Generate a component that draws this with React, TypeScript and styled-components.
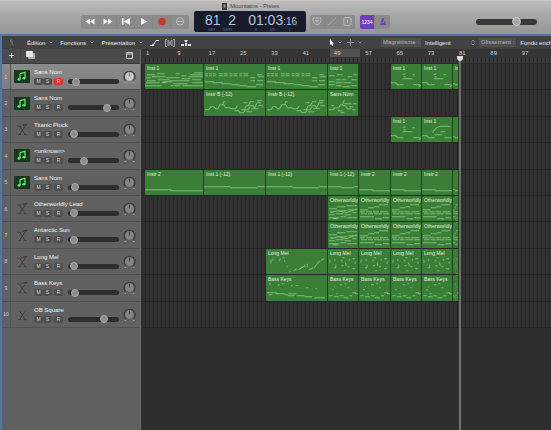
import React from "react";
import styled, { createGlobalStyle, css } from "styled-components";

const Global = createGlobalStyle`
  * { box-sizing: border-box; }
  body { margin: 0; background: #2e2e2e; font-family: "Liberation Sans", Arial, sans-serif; }
  button, select, input { font: inherit; color: inherit; margin: 0; padding: 0; border: 0; background: none; }
`;

const Window = styled.div`
  min-height: 100vh;
  display: flex;
  flex-direction: column;
  overflow: hidden;
`;

const Header = styled.header`
  border-top: 1px solid #cfc5be;
  background: linear-gradient(#bdbdbd, #a9a9a9 40%, #969696);
`;

const TitleBar = styled.h1`
  margin: 0;
  height: 10px;
  padding-left: 222px;
  display: flex;
  align-items: center;
  gap: 3px;
  font-size: 6px;
  line-height: 8px;
  font-weight: 400;
  color: #444;
  white-space: nowrap;
`;

const Toolbar = styled.div`
  height: 23px;
  padding: 0 14px 2px 81px;
  display: flex;
  align-items: center;
`;

const ButtonGroup = styled.div`
  display: flex;
  height: 14px;
  border-radius: 2px;
  overflow: hidden;
  background: #8b8b8b;
`;

const ToolButton = styled.button<{ $wide?: boolean; $active?: boolean }>`
  width: ${(p) => (p.$wide ? 18 : 15)}px;
  height: 14px;
  display: grid;
  place-items: center;
  border-right: 1px solid #858585;
  font-size: 5px;
  font-weight: 700;
  &:last-child { border-right: 0; }
  ${(p) => p.$active && css`background: #7142b4; color: #e3d6f5;`}
`;

const Gap = styled.span`
  width: 5px;
`;

const Lcd = styled.div`
  margin: 0 4px 0 5px;
  width: 112px;
  height: 21px;
  padding: 0 2px 0 11px;
  display: flex;
  align-items: center;
  gap: 12px;
  border-radius: 2px;
  background: #171b2b;
  color: #b3c4de;
  & > svg { margin-left: auto; }
`;

const Readout = styled.div`
  display: grid;
  font-size: 14px;
  line-height: 17px;
  white-space: nowrap;
  small { font-size: 10px; line-height: 10px; }
`;

const Captions = styled.div`
  display: flex;
  justify-content: space-around;
  font-size: 3px;
  line-height: 3px;
  color: #60708e;
`;

const Range = styled.input<{ $master?: boolean }>`
  appearance: none;
  display: block;
  width: ${(p) => (p.$master ? 61 : 51)}px;
  height: ${(p) => (p.$master ? 6 : 5)}px;
  border-radius: 3px;
  background: ${(p) => (p.$master ? "#373a34" : "#2f2f2e")};
  &::-webkit-slider-thumb {
    appearance: none;
    width: ${(p) => (p.$master ? 9 : 8)}px;
    height: ${(p) => (p.$master ? 9 : 8)}px;
    border-radius: 5px;
    border: 1px solid ${(p) => (p.$master ? "#cacaca" : "#aaa")};
    background: ${(p) => (p.$master ? "#a5a5a5" : "#8d8d8d")};
  }
`;

const Master = styled.div`
  margin-left: auto;
`;

const Editor = styled.main`
  flex: 1;
  display: flex;
  flex-direction: column;
  border: solid #5475a5;
  border-width: 2px 0 0 2px;
`;

const MenuBar = styled.nav`
  height: 13px;
  display: flex;
  align-items: center;
  overflow: hidden;
  background: #424242;
  color: #ececec;
  font-size: 6px;
  line-height: 8px;
  white-space: nowrap;
`;

const MenuSection = styled.div<{ $width?: number; $pad?: number; $gap?: number }>`
  flex: none;
  width: ${(p) => (p.$width ? `${p.$width}px` : "auto")};
  padding-left: ${(p) => p.$pad || 0}px;
  display: flex;
  align-items: center;
  gap: ${(p) => p.$gap || 0}px;
`;

const MenuButton = styled.button`
  display: flex;
  align-items: center;
  gap: 4px;
`;

const OptionLabel = styled.label`
  height: 9px;
  padding: 0 2px;
  border-radius: 1px;
  background: #505050;
  color: #b5b5b5;
  line-height: 9px;
`;

const OptionSelect = styled.select<{ $width: number }>`
  appearance: none;
  width: ${(p) => p.$width}px;
  outline: 0;
`;

const Workspace = styled.div`
  flex: 1;
  display: grid;
  grid-template-columns: 139px 1fr;
`;

const Sidebar = styled.section`
  background: #606060;
  border-right: 1px solid #6c6c6c;
`;

const SidebarTools = styled.div`
  height: 15px;
  padding: 0 5px 2px 0;
  display: flex;
  align-items: center;
  background: #4b4b4b;
  border-bottom: 1px solid #393939;
  color: #cfcfcf;
`;

const SidebarTool = styled.button`
  width: 19px;
  height: 12px;
  display: grid;
  place-items: center;
  border-right: 1px solid #434343;
  &:last-child { margin-left: auto; border-right: 0; width: 12px; }
`;

const trackRows = css`
  display: grid;
  grid-template-rows: repeat(10, 1fr);
  height: 264px;
`;

const TrackList = styled.ol`
  ${trackRows}
  margin: 0;
  padding: 0;
  list-style: none;
`;

const TrackRow = styled.li<{ $selected?: boolean }>`
  display: grid;
  grid-template-columns: 9px 22px 34px 51px 1fr;
  border-bottom: 1px solid #515151;
  background: ${(p) => (p.$selected ? "linear-gradient(#8b8b8b, #7d7d7d)" : "#616161")};
`;

const TrackNumber = styled.span`
  display: grid;
  place-items: center;
  border-right: 1px solid #555;
  font-size: 5px;
  color: #d0d0d0;
`;

const TrackIcon = styled.span`
  display: grid;
  place-items: center;
`;

const TrackInfo = styled.div`
  padding-top: 5px;
  padding-left: 1px;
`;

const TrackName = styled.div`
  font-size: 6px;
  line-height: 7px;
  color: #f4f4f4;
  white-space: nowrap;
`;

const TrackButtons = styled.div`
  margin-top: 2px;
  display: flex;
`;

const TrackButton = styled.button<{ $armed?: boolean }>`
  width: 9px;
  height: 7px;
  border-radius: 2px;
  background: ${(p) => (p.$armed ? "#d8382b" : "#4f4f4f")};
  color: #d3d3d3;
  font-size: 5px;
  line-height: 7px;
  text-align: center;
  &:last-child { margin-left: 2px; }
`;

const TrackVolume = styled.div`
  padding-top: 15px;
  padding-left: 1px;
`;

const TrackPan = styled.span`
  display: grid;
  place-items: center;
`;

const Timeline = styled.section`
  position: relative;
  min-width: 0;
  background: #2e2e2e;
`;

const Ruler = styled.div`
  height: 15px;
  padding-left: 5px;
  background: repeating-linear-gradient(90deg, #2d2d2d 0 1px, #3a3a3a 1px 4px) 0 9px no-repeat, #353535;
  border-bottom: 1px solid #292929;
`;

const RulerNumbers = styled.div`
  display: grid;
  grid-template-columns: repeat(12, 32fr) 30fr;
  height: 8px;
  font-size: 6px;
  line-height: 8px;
  color: #cfcfcf;
`;

const RulerNumber = styled.span<{ $cycle?: boolean }>`
  ${(p) =>
    p.$cycle &&
    css`
      margin: 0 5px 0 -4px;
      padding-left: 4px;
      background: #515151;
    `}
`;

const Lanes = styled.div`
  ${trackRows}
  background: repeating-linear-gradient(90deg, #292929 0 1px, #303030 1px 4px);
`;

const Lane = styled.div`
  display: grid;
  grid-template-columns: 59fr 62fr 62fr 31fr 32fr 31fr 31fr 6fr 92fr;
  padding-left: 4px;
  border-bottom: 1px solid #262626;
  min-height: 0;
`;

const RegionBox = styled.div<{ $column: number }>`
  grid-column: ${(p) => p.$column};
  grid-row: 1;
  display: grid;
  min-width: 0;
  overflow: hidden;
  border-radius: 1px;
  border-right: 1px solid #1c461b;
  background: #3b7e37;
  color: #e0f2dc;
  & > * { grid-area: 1 / 1; min-width: 0; }
`;

const RegionName = styled.span`
  padding-left: 2px;
  padding-top: 1px;
  font-size: 5px;
  line-height: 7px;
  white-space: nowrap;
  overflow: hidden;
`;

const Notes = styled.svg`
  display: block;
  width: 100%;
  height: 100%;
  min-height: 0;
  fill: none;
  stroke: #7fbb7a;
  stroke-width: 1;
`;

const Playhead = styled.div`
  position: absolute;
  top: 7px;
  bottom: 0;
  left: 77%;
  width: 6px;
  display: flex;
  flex-direction: column;
  align-items: center;
`;

const PlayheadLine = styled.span`
  flex: 1;
  width: 2px;
  background: #6f6f6f;
`;

type NoteShape = { width: number; d: string };

const shapes: Record<string, NoteShape> = {
  chords: {
    width: 59,
    d: "M2 10.5h8M12 9.5h8M1 13.5h5M7 12.5h14M2 16.5h9M13 15.5h12M1 18.5h14M17 18.5h5M0 21.5h17M22 13.5h7M31 9.5h4M37 11.5h5M29 13.5h6M37 14.5h9M25 16.5h20M18 17.5h9M29 19.5h14M30 21.5h6M38 21.5h10M46 10.5h13M50 8.5h9M44 12.5h15M48 15.5h9M48 18.5h11M46 21.5h13M26 21.5h3",
  },
  riff: {
    width: 62,
    d: "M1 9.5h3M5 9.5h3M9 9.5h3M15 9.5h4M20 9.5h4M26 9.5h3M30 9.5h4M36 9.5h3M40 9.5h5M1 11.5h3M5 11.5h3M9 11.5h3M15 11.5h4M20 11.5h4M26 11.5h3M30 11.5h4M36 11.5h3M40 11.5h5M47 13.5h5M47 16.5h5M54 10.5h5M55 12.5h6M54 16.5h6M1 17.5h9M9 18.5h10M18 19.5h10M28 20.5h8M36 21.5h8M44 22.5h9M53 20.5h7",
  },
  riffShort: {
    width: 31,
    d: "M1 11.5h6M9 10.5h6M8 15.5h5M14 15.5h5M1 17.5h6M8 18.5h7M16 18.5h8M20 12.5h5M26 10.5h4M24 15.5h6M1 20.5h6M8 21.5h6M15 22.5h8M24 21.5h6",
  },
  melody: {
    width: 62,
    d: "M1 19.5h4l2-3h3l2 2h2l2-4h3l1-3h2M17 14.5h3l2 3h4l2 1h4l2-3M31 20.5h4l2 2h3l2-3h3l2-3M38 19.5h3l2-4h2l2-4h4M40 12.5h4M46 15.5h4l2 3h3M48 18.5h3l3-6h4M55 15.5h5M43 21.5h6M54 10.5h5",
  },
  melodyShort: {
    width: 31,
    d: "M1 19.5h4l2-2h4l2-3h2l2-5M15 15.5h3l2 3h4M10 20.5h5M17 13.5h7M22 16.5h4M25 19.5h4M26 13.5h4M13 22.5h4M3 15.5h3",
  },
  sparse: {
    width: 31,
    d: "M0 18.5h5l2 2h6M12 14.5h3M12 10.5l3-1M15 14.5h7M22 10.5h3M13 12.5h2M23 20.5h7M29 22.5l2-2",
  },
  arc: {
    width: 31,
    d: "M0 18.5h5l2 2h6M11 15.5q3-6 9-6.500h7l2 1M13 17.5h8M19 14.5h5M23 20.5h7",
  },
  low: { width: 62, d: "M0 19.5h28M27 20.5h35" },
  middle: { width: 62, d: "M0 16.5h27M27 17.5h27M54 16.5h8" },
  lead: {
    width: 31,
    d: "M1 12.5h8M9 10.5h9M19 9.5h11M2 15.5h7M10 14.5h10M21 13.5h9M1 18.5h6M8 17.5h8M17 18.5h7M25 16.5h5M1 21.5h11M13 20.5h6M20 21.5h10M5 22.5h5M3 16.5l7-2 9 2 11-4",
  },
  leadRepeat: {
    width: 31,
    d: "M20 8.5h9M15 10.5h5M1 13.5h8M9 11.5h6M1 15.5h5M7 15.5h6M14 15.5h6M21 15.5h8M2 17.5h6M9 17.5h5M15 17.5h8M24 17.5h6M1 20.5h14M16 22.5h7M24 21.5h6",
  },
  long: {
    width: 62,
    d: "M5 14.5v-4M7 11.5v-2M13 11.5l2-2M17 8.5h2M19 10.5v2M21 17.5h1M23 22.5h2M28 21.5l3-2M33 20.5l3-2M36 18.5l4-2M42 17.5v-3M44 20.5l4-2M49 18.5l3-4M52 14.5l3-3M56 11.5l3-2M39 15.5v2",
  },
  dots: {
    width: 31,
    d: "M2 10.5v3M7 9.5v2M8 15.5v3M6 18.5h2M13 11.5h2M15 8.5h2M18 13.5l1 3M22 11.5v-2M25 9.5h3M28 12.5v2M16 21.5h2M20 17.5h2M25 19.5h3M14 16.5h2",
  },
  bass: {
    width: 62,
    d: "M3 8.5h2M12 9.5h2M16 8.5h3M25 10.5h2M30 10.5h3M41 12.5h2M50 13.5h2M1 17.5h10M10 18.5h9M19 19.5h3M23 18.5h8M31 20.5h8M39 21.5h8M49 22.5h11M22 20.5h7M3 19.5h3",
  },
  bassShort: {
    width: 31,
    d: "M4 14.5h2M6 11.5h1M12 9.5h3M17 8.5h2M20 12.5h2M1 20.5h4M6 21.5h5M12 20.5h4M16 22.5h5M22 20.5h3M25 17.5h4M28 18.5h3M8 18.5h2",
  },
};

type Region = [column: number, name: string, shape: string];
type Track = { name: string; volume: number; midi?: boolean; selected?: boolean; regions: Region[] };

const repeated = (name: string, shape: string): Region[] => [
  [5, name, shape],
  [6, name, shape],
  [7, name, shape],
  [8, "", shape],
];

const tracks: Track[] = [
  {
    name: "Sans Nom", volume: 10, midi: true, selected: true,
    regions: [[1, "Inst 1", "chords"], [2, "Inst 1", "riff"], [3, "Inst 1", "riff"], [4, "Inst 1", "riffShort"],
      [6, "Inst 1", "sparse"], [7, "Inst 1", "sparse"], [8, "In", "low"]],
  },
  {
    name: "Sans Nom", volume: 82, midi: true,
    regions: [[2, "Instr B (-12)", "melody"], [3, "Instr B (-12)", "melody"], [4, "Sans Nom", "melodyShort"]],
  },
  { name: "Titanic Pluck", volume: 4, regions: [[6, "Inst 1", "sparse"], [7, "Inst 1", "arc"], [8, "", "low"]] },
  { name: "<unknown>", volume: 27, midi: true, regions: [] },
  {
    name: "Sans Nom", volume: 8, midi: true,
    regions: [[1, "Instr 2", "low"], [2, "Inst 1 (-12)", "middle"], [3, "Inst 1 (-12)", "middle"],
      [4, "Inst 1 (-12)", "middle"], ...repeated("Instr 2", "low")],
  },
  { name: "Otherworldly Lead", volume: 4, regions: [[4, "Otherworldly", "lead"], ...repeated("Otherworldly", "leadRepeat")] },
  { name: "Antarctic Sun", volume: 4, regions: [[4, "Otherworldly", "lead"], ...repeated("Otherworldly", "leadRepeat")] },
  { name: "Long Mel", volume: 4, regions: [[3, "Long Mel", "long"], [4, "Long Mel", "dots"], ...repeated("Long Mel", "dots")] },
  { name: "Bass Keys", volume: 6, regions: [[3, "Bass Keys", "bass"], [4, "Bass Keys", "bassShort"], ...repeated("Bass Keys", "bassShort")] },
  { name: "OB Square", volume: 75, regions: [] },
];

const Chevron = () => (
  <svg width="4" height="3" viewBox="0 0 4 3" fill="none" stroke="#8c8c8c">
    <path d="M.5.5 2 2 3.5.5" />
  </svg>
);

const MidiIcon = () => (
  <svg width="16" height="13" viewBox="0 0 16 13">
    <rect width="16" height="13" rx="1" fill="#173820" />
    <path d="M6 3.6 11 2.4V8M6 9V3.6" fill="none" stroke="#5fe36b" strokeWidth="1.3" />
    <ellipse cx="5" cy="9.4" rx="1.6" ry="1.3" fill="#5fe36b" />
    <ellipse cx="10" cy="8.3" rx="1.6" ry="1.3" fill="#5fe36b" />
  </svg>
);

const SynthIcon = ({ plain }: { plain?: boolean }) => (
  <svg width="13" height="13" viewBox="0 0 14 14" fill="none">
    {!plain && <path d="M1.500 2.300 12 .8v1.600L2 4Z" fill="#453a35" />}
    {!plain && <path d="M2.500 2.800 8 2" stroke="#9b6f5d" strokeWidth=".7" />}
    <path d="M4 3.500 10.500 13M10.500 2.500 4 12M2.500 12.500h3M8.500 12.500h3" stroke="#3c3c3c" />
  </svg>
);

const PanKnob = ({ bright }: { bright?: boolean }) => (
  <svg width="13" height="15" viewBox="0 0 13 15">
    <path d="M2.500 11.500A5.500 5.500 0 1 1 10.500 11.500" fill="none" stroke="#383838" strokeWidth="1.2" />
    <circle cx="6.5" cy="7.5" r="4.3" fill={bright ? "#c9c9c9" : "#858585"} />
    <path d="M6.500 3.500v4" stroke={bright ? "#777" : "#3c3c3c"} />
    <path d="M1.500 13.500h1.500M10 13.500h1.500" stroke="#a0a0a0" />
  </svg>
);

const transport: { label: string; icon: React.ReactNode }[] = [
  { label: "Retour rapide", icon: <path d="M7 1.5v6L2.5 4.5ZM11.5 1.5v6L7 4.5Z" fill="#f2f2f2" /> },
  { label: "Avance rapide", icon: <path d="M2.5 1.5v6L7 4.5ZM7 1.5v6l4.500-3Z" fill="#f2f2f2" /> },
  { label: "Début", icon: <path d="M3 1h1.500v7H3ZM11 1v7L4.500 4.500Z" fill="#f2f2f2" /> },
  { label: "Lecture", icon: <path d="M4 1v7l6.500-3.500Z" fill="#fafafa" /> },
  { label: "Enregistrer", icon: <circle cx="7" cy="4.500" r="3.800" fill="#c93a2c" /> },
  {
    label: "Cycle",
    icon: (
      <g fill="none" stroke="#c2c2c2">
        <circle cx="7" cy="4.500" r="3.600" />
        <path d="M4.500 4.500h5" />
      </g>
    ),
  },
];

export default function App() {
  return (
    <>
      <Global />
      <Window>
        <Header>
          <TitleBar>
            <svg width="5" height="7" viewBox="0 0 5 7"><path d="M0 0h5v7H0Z" fill="#383838" /><path d="M1.500 1.500h2v3h-2Z" fill="#999" /></svg>
            Mountains - Pistes
          </TitleBar>
          <Toolbar>
            <ButtonGroup>
              {transport.map((t) => (
                <ToolButton key={t.label} $wide aria-label={t.label}>
                  <svg width="14" height="9" viewBox="0 0 14 9">{t.icon}</svg>
                </ToolButton>
              ))}
            </ButtonGroup>
            <Lcd>
              <Readout>
                <span>81 &nbsp;2</span>
                <Captions><span>MES</span><span>TEMPS</span></Captions>
              </Readout>
              <Readout>
                <span>01:03<small>:16</small></span>
                <Captions><span>H</span><span>MIN</span><span>S</span></Captions>
              </Readout>
              <Chevron />
            </Lcd>
            <ButtonGroup>
              <ToolButton aria-label="Remplacer">
                <svg width="10" height="9" viewBox="0 0 10 9" fill="none" stroke="#bdbdbd"><path d="M1 1h8v3Q8 7 5 8 2 7 1 4Z" /><path d="M3.500 3.500h3L5 5.500Z" /></svg>
              </ToolButton>
              <ToolButton aria-label="Accordeur">
                <svg width="10" height="9" viewBox="0 0 10 9" stroke="#a5a5a5"><path d="M1 8 9 1" /></svg>
              </ToolButton>
              <ToolButton aria-label="Solo">
                <svg width="9" height="9" viewBox="0 0 9 9" fill="none" stroke="#bdbdbd"><rect x="1" y=".5" width="7" height="8" rx="1" /><path d="M4.500 2.500v4" /></svg>
              </ToolButton>
            </ButtonGroup>
            <Gap />
            <ButtonGroup>
              <ToolButton $active aria-label="Décompte">1234</ToolButton>
              <ToolButton aria-label="Métronome">
                <svg width="8" height="9" viewBox="0 0 8 9"><path d="M3 1h2l2 7H1Z" fill="#7349ac" /><path d="M4 6 6 2" stroke="#a591bf" strokeWidth=".7" /></svg>
              </ToolButton>
            </ButtonGroup>
            <Master>
              <Range $master type="range" aria-label="Volume principal" defaultValue={70} />
            </Master>
          </Toolbar>
        </Header>
        <Editor>
          <MenuBar>
            <MenuSection $width={25} $pad={8}>
              <svg width="5" height="7" viewBox="0 0 5 7" fill="none" stroke="#777"><path d="M.5 3V1h2M2 2v3l2 1.500" /></svg>
            </MenuSection>
            <MenuSection $width={123} $gap={7}>
              {["Édition", "Fonctions", "Présentation"].map((m) => (
                <MenuButton key={m}>{m}<Chevron /></MenuButton>
              ))}
            </MenuSection>
            <MenuSection $width={179} $gap={6}>
              <svg width="9" height="8" viewBox="0 0 9 8" fill="none" stroke="#e5e5e5"><path d="M0 6.500h3L6 1.500h3" /><circle cx="3" cy="6" r=".7" /></svg>
              <svg width="10" height="8" viewBox="0 0 10 8" fill="none" stroke="#a5a5a5"><path d="M2 .5H.5v7H2M8 .5h1.500v7H8M3 1l4 6M7 1 3 7M3 1v6M7 1v6" /></svg>
              <svg width="10" height="8" viewBox="0 0 10 8" fill="#e0e0e0"><path d="M3 1h4L5 4ZM0 5h3v2H0ZM7 5h3v2H7ZM4 4h2v3H4Z" /></svg>
            </MenuSection>
            <MenuSection $width={52} $gap={5}>
              <MenuButton aria-label="Outil pointeur">
                <svg width="5" height="7" viewBox="0 0 5 7"><path d="M1 0v6l1.300-1L3.200 7l1-.5L3.500 4.500H5Z" fill="#fff" /></svg>
                <Chevron />
              </MenuButton>
              <MenuButton aria-label="Outil secondaire">
                <svg width="7" height="7" viewBox="0 0 7 7" stroke="#8d8d8d"><path d="M3.500 0v7M0 3.500h7" /></svg>
                <Chevron />
              </MenuButton>
            </MenuSection>
            <MenuSection $gap={4}>
              <OptionLabel htmlFor="snap">Magnétisme :</OptionLabel>
              <OptionSelect id="snap" $width={42}><option>Intelligent</option></OptionSelect>
              <svg width="4" height="7" viewBox="0 0 4 7" fill="none" stroke="#8c8c8c"><path d="M.5 2.500 2 1l1.500 1.500M.5 4.500 2 6l1.500-1.500" /></svg>
              <OptionLabel htmlFor="drag">Glissement :</OptionLabel>
              <OptionSelect id="drag" $width={60}><option>Fondu enchaîné</option></OptionSelect>
            </MenuSection>
          </MenuBar>
          <Workspace>
            <Sidebar>
              <SidebarTools>
                <SidebarTool aria-label="Ajouter une piste">
                  <svg width="5" height="5" viewBox="0 0 5 5" stroke="currentColor"><path d="M2.500 0v5M0 2.500h5" /></svg>
                </SidebarTool>
                <SidebarTool aria-label="Dupliquer la piste">
                  <svg width="9" height="8" viewBox="0 0 9 8"><rect x="2" y="2" width="7" height="6" rx="1" fill="#aaa" /><rect width="7" height="6" rx="1" fill="#e5e5e5" /></svg>
                </SidebarTool>
                <SidebarTool aria-label="Configuration">
                  <svg width="7" height="7" viewBox="0 0 7 7" fill="none" stroke="currentColor"><path d="M.5.5h6v6h-6ZM.5 2h6" /></svg>
                </SidebarTool>
              </SidebarTools>
              <TrackList>
                {tracks.map((t, i) => (
                  <TrackRow key={i} $selected={t.selected}>
                    <TrackNumber>{i + 1}</TrackNumber>
                    <TrackIcon>{t.midi ? <MidiIcon /> : <SynthIcon plain={i === 9} />}</TrackIcon>
                    <TrackInfo>
                      <TrackName>{t.name}</TrackName>
                      <TrackButtons>
                        <TrackButton>M</TrackButton>
                        <TrackButton>S</TrackButton>
                        <TrackButton $armed={t.selected}>R</TrackButton>
                      </TrackButtons>
                    </TrackInfo>
                    <TrackVolume>
                      <Range type="range" aria-label={`Volume ${t.name}`} defaultValue={t.volume} />
                    </TrackVolume>
                    <TrackPan><PanKnob bright={t.selected} /></TrackPan>
                  </TrackRow>
                ))}
              </TrackList>
            </Sidebar>
            <Timeline>
              <Ruler>
                <RulerNumbers>
                  {Array.from({ length: 13 }, (_, i) => (
                    <RulerNumber key={i} $cycle={i === 6}>{i * 8 + 1}</RulerNumber>
                  ))}
                </RulerNumbers>
              </Ruler>
              <Lanes>
                {tracks.map((t, i) => (
                  <Lane key={i}>
                    {t.regions.map(([column, name, shape]) => (
                      <RegionBox key={column} $column={column}>
                        <Notes viewBox={`0 0 ${shapes[shape].width} 25`} preserveAspectRatio="none">
                          <path d={shapes[shape].d} />
                        </Notes>
                        <RegionName>{name}</RegionName>
                      </RegionBox>
                    ))}
                  </Lane>
                ))}
              </Lanes>
              <Playhead>
                <svg width="6" height="6" viewBox="0 0 6 6"><path d="M0 0h6v3L3 6 0 3Z" fill="#d8d8d8" /></svg>
                <PlayheadLine />
              </Playhead>
            </Timeline>
          </Workspace>
        </Editor>
      </Window>
    </>
  );
}
